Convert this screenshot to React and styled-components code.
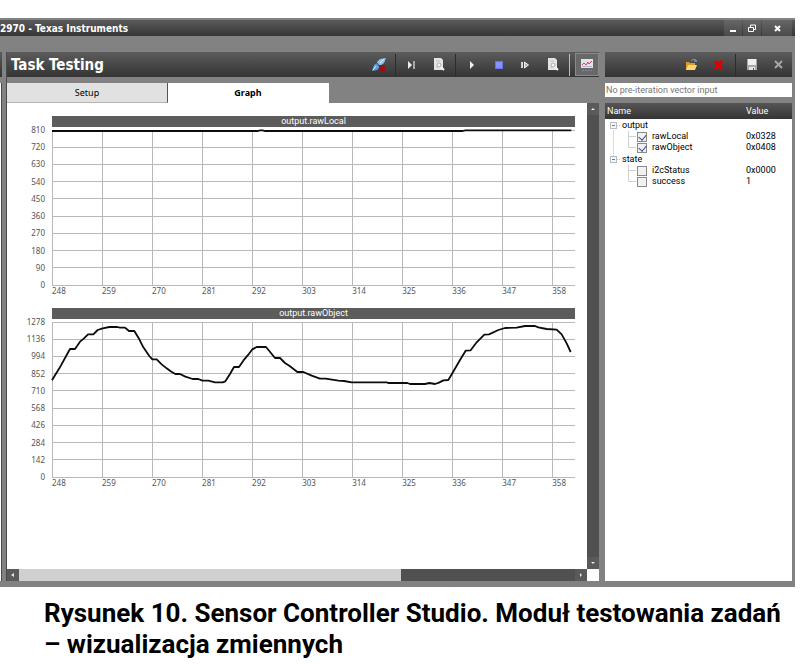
import React from 'react'
import styled, { createGlobalStyle } from 'styled-components'

const uiFont = '"Noto Sans", "Open Sans", sans-serif'
const denseFont = 'Roboto, "Noto Sans", sans-serif'
const titleFont = '"DejaVu Sans Condensed", "DejaVu Sans", sans-serif'

const GlobalStyle = createGlobalStyle`
    * {
        box-sizing: border-box;
    }

    body {
        margin: 0;
        background: #ffffff;
        color: #000000;
        font-family: ${uiFont};
        font-size: 9px;
    }

    button,
    input {
        padding: 0;
        border: 0;
        background: none;
        color: inherit;
        font: inherit;
    }

    svg {
        display: block;
    }
`

const Page = styled.div`
    display: flex;
    flex-direction: column;
    min-height: 100vh;
    padding-top: 18px;
`

const AppWindow = styled.div`
    display: flex;
    flex-direction: column;
    flex: 1;
    margin-right: 10px;
    padding: 2px 0 6px;
    background: #828282;
`

const TitleBar = styled.header`
    display: flex;
    justify-content: space-between;
    height: 16px;
    padding-right: 3px;
    background: linear-gradient(#5a5a5a, #363636);
    color: #ffffff;
`

const WindowTitle = styled.h1`
    margin: 0;
    font: bold 10px/17px ${titleFont};
`

const WindowButtons = styled.div`
    display: flex;
    gap: 1px;
`

const WindowButton = styled.button`
    display: flex;
    align-items: center;
    justify-content: center;
    width: ${({ $wide }) => ($wide ? 30 : 18)}px;
    background: linear-gradient(#666666, #4a4a4a);
`

const Workspace = styled.div`
    display: flex;
    flex: 1;
    padding: 16px 3px 0 0;
`

const CollapsedPanel = styled.aside`
    display: flex;
    flex-direction: column;
    gap: 6px;
    width: 2px;
    margin-right: 4px;
`

const CollapsedBody = styled.div`
    flex: 1;
    border-right: 1px solid #4a4a4a;
    background: #ffffff;
`

const TaskPanel = styled.main`
    display: flex;
    flex-direction: column;
    flex: 1;
    min-width: 0;
    border-left: 1px solid #4a4a4a;
`

const WatchPanel = styled.aside`
    display: flex;
    flex-direction: column;
    width: 187px;
    margin-left: 6px;
    font-family: ${denseFont};
`

const Toolbar = styled.div`
    display: flex;
    align-items: center;
    height: 25px;
    flex-shrink: 0;
    background: linear-gradient(#5c5c5c, #343434);
`

const ToolbarTitle = styled.h2`
    flex: 1;
    margin: 0;
    padding: 2px 0 0 4px;
    color: #ffffff;
    font: bold 15px/23px ${titleFont};
`

const ToolButton = styled.button`
    display: flex;
    align-items: center;
    justify-content: center;
    width: 27px;
    height: 25px;
`

const ActiveToolButton = styled(ToolButton)`
    width: 24px;
    height: 23px;
    margin-left: 3px;
    border: 1px solid #8a8a8a;
    background: #686868;
`

const Separator = styled.span`
    width: 1px;
    height: 22px;
    margin: 0 2px 0 3px;
    background: ${({ $light }) => ($light ? '#bdbdbd' : '#2c2c2c')};
`

const Spacer = styled.span`
    flex: 1;
`

const Tabs = styled.div`
    display: flex;
    margin-top: 6px;
`

const Tab = styled.button`
    width: 161px;
    height: 20px;
    border-right: 1px solid ${({ $active }) => ($active ? '#ffffff' : '#555555')};
    border-bottom: 1px solid ${({ $active }) => ($active ? '#ffffff' : '#b4b4b4')};
    background: ${({ $active }) => ($active ? '#ffffff' : '#e1e1e1')};
    font-weight: ${({ $active }) => ($active ? 'bold' : 'normal')};
`

const ScrollArea = styled.div`
    display: grid;
    grid-template-columns: 1fr 12px;
    grid-template-rows: 1fr 12px;
    flex: 1;
    background: #ffffff;
`

const Charts = styled.div`
    display: flex;
    flex-direction: column;
    gap: 11px;
    min-width: 0;
    padding: 13px 12px 13px 0;
`

const ChartGrid = styled.section`
    display: grid;
    grid-template-columns: 38px 1fr;
    grid-template-rows: 11px 155px 12px;
    row-gap: 3px;
    column-gap: 7px;
    margin-bottom: -3px;
    color: #555555;
    font-size: 8px;
    line-height: 12px;
`

const ChartTitle = styled.h3`
    grid-column: 2;
    margin: 0;
    background: #5c5c5c;
    color: #ffffff;
    font: 9px/11px ${denseFont};
    text-align: center;
`

const YAxis = styled.div`
    display: flex;
    flex-direction: column;
    justify-content: space-between;
    margin: -6px 0;
    text-align: right;
`

const XAxis = styled.div`
    display: grid;
    grid-column: 2;
    grid-template-columns: repeat(10, minmax(0, 11fr)) minmax(0, 5fr);
    margin-top: -3px;
`

const PlotSvg = styled.svg`
    width: 100%;
    height: 155px;
    overflow: visible;

    line,
    polyline {
        fill: none;
        vector-effect: non-scaling-stroke;
    }

    line {
        stroke: #b8b8b8;
        shape-rendering: crispEdges;
    }

    polyline {
        stroke: #0c0c0c;
        stroke-width: 1.8px;
        stroke-linejoin: round;
    }
`

const ScrollTrack = styled.div`
    display: flex;
    flex-direction: ${({ $vertical }) => ($vertical ? 'column' : 'row')};
    justify-content: space-between;
    background: #505050;
`

const ScrollButton = styled.button`
    display: flex;
    align-items: center;
    justify-content: center;
    width: 12px;
    height: 12px;
    background: #5a5a5a;
`

const ScrollThumb = styled.div`
    flex: 11;
    background: #d0d0d0;
`

const ScrollGap = styled.div`
    flex: 5;
`

const VectorInput = styled.input`
    height: 14px;
    margin: 6px 0;
    padding-left: 1px;
    background: #ffffff;
    color: #777777;
`

const WatchBody = styled.div`
    flex: 1;
    background: #ffffff;
`

const WatchTable = styled.table`
    width: 100%;
    border-collapse: collapse;
    table-layout: fixed;

    thead {
        background: linear-gradient(#555555, #353535);
    }

    th {
        height: 16px;
        padding: 0 0 0 2px;
        color: #ffffff;
        font-weight: normal;
        text-align: left;
    }

    th:last-child {
        width: 46px;
        padding: 0;
    }

    td {
        padding: 0;
        line-height: 11px;
    }
`

const NameCell = styled.div`
    display: flex;
    align-items: center;
    height: ${({ $group }) => ($group ? 12 : 11)}px;
`

const TreeToggle = styled.button`
    width: 17px;
    height: 12px;
`

const WatchLabel = styled.label`
    display: flex;
    align-items: center;
    gap: 5px;
`

const Checkbox = styled.input`
    appearance: none;
    width: 10px;
    height: 10px;
    margin: 0;
    border: 1px solid #8a8a8a;
    background: #f1f1f1;

    &:checked::after {
        content: '';
        display: block;
        width: 4px;
        height: 6px;
        margin-left: 2px;
        border: solid #34508c;
        border-width: 0 1px 1px 0;
        transform: rotate(40deg);
    }
`

const Caption = styled.p`
    margin: 0;
    padding: 11px 10px 4px 44px;
    font: bold 26px/31px Roboto, sans-serif;
`

const xTicks = [248, 259, 270, 281, 292, 303, 314, 325, 336, 347, 358]

// trace points are on a 1569 x 465 grid, origin in the top left corner
const charts = [
    {
        name: 'output.rawLocal',
        yTicks: [810, 720, 630, 540, 450, 360, 270, 180, 90, 0],
        trace: '0,3 618,3 624,1 632,1 638,3 1232,3 1240,1 1558,1',
    },
    {
        name: 'output.rawObject',
        yTicks: [1278, 1136, 994, 852, 710, 568, 426, 284, 142, 0],
        trace:
            '0,175 9,160 22,139 54,81 69,81 84,59 96,49 108,37 124,37 137,24 ' +
            '152,19 172,15 196,15 204,17 219,17 231,27 247,27 262,52 274,76 ' +
            '292,102 301,112 314,112 329,127 344,139 356,148 370,156 384,156 ' +
            '400,164 422,171 439,171 451,176 469,176 489,181 512,181 520,178 ' +
            '534,156 546,135 561,135 577,112 589,98 601,82 614,75 642,75 ' +
            '652,87 669,108 684,108 699,123 714,133 736,150 754,150 779,161 ' +
            '804,170 821,170 859,176 876,177 899,181 1004,181 1009,183 ' +
            '1066,183 1074,186 1119,186 1132,183 1149,186 1161,182 1174,175 ' +
            '1189,174 1201,154 1224,114 1241,86 1256,85 1274,61 1297,38 ' +
            '1311,37 1339,24 1359,18 1394,17 1419,12 1449,12 1459,16 1484,21 ' +
            '1514,23 1529,37 1544,64 1556,90',
    },
]

const watches = [
    {
        group: 'output',
        items: [
            { name: 'rawLocal', value: '0x0328', checked: true },
            { name: 'rawObject', value: '0x0408', checked: true },
        ],
    },
    {
        group: 'state',
        items: [
            { name: 'i2cStatus', value: '0x0000', checked: false },
            { name: 'success', value: '1', checked: false },
        ],
    },
]

const ConnectIcon = () => (
    <svg width="14" height="14" viewBox="0 0 14 14">
        <path d="M0 13 L2 7 L6 4 L9 8 L5 12 Z" fill="#5b9fd8" />
        <path d="M5 4 L8 1 L14 0 L12 5 L8 8 Z" fill="#8cc6ee" />
        <path d="M1 12 L4 8 M8 5 L12 1" stroke="#d9efff" />
        <path d="M4 4 L8 9" stroke="#3a4a5c" />
        <rect x="7" y="7" width="6" height="6" fill="#9c1010" />
    </svg>
)

const StepToIcon = () => (
    <svg width="9" height="8" viewBox="0 0 9 8">
        <path d="M1 0 L5 4 L1 8 Z" fill="#ececec" />
        <rect x="6" y="0" width="2" height="8" fill="#a8a8a8" />
    </svg>
)

const LogIcon = () => (
    <svg width="12" height="13" viewBox="0 0 12 13">
        <path d="M1 0 H8 L10 2 V12 H1 Z" fill="#e4e4e4" />
        <path d="M3 3 H7 M3 9 H5" stroke="#c2c2c2" />
        <circle cx="6" cy="7" r="2" fill="#f2f2f2" stroke="#b0b0b0" />
        <path d="M8 9 L11 12" stroke="#f4f4f4" strokeWidth="2" />
    </svg>
)

const PlayIcon = () => (
    <svg width="6" height="8" viewBox="0 0 6 8">
        <path d="M1 0 L5 4 L1 8 Z" fill="#efefef" />
    </svg>
)

const StopIcon = () => (
    <svg width="8" height="8" viewBox="0 0 8 8">
        <rect x="0.5" y="0.5" width="7" height="7" fill="#8593ff" stroke="#6472ec" />
    </svg>
)

const StepIcon = () => (
    <svg width="9" height="8" viewBox="0 0 9 8">
        <rect x="0" y="1" width="2" height="6" fill="#d4d4d4" />
        <path d="M3.5 1 V7 L7.5 4 Z" fill="#b4b4b4" stroke="#efefef" />
    </svg>
)

const GraphIcon = () => (
    <svg width="12" height="12" viewBox="0 0 12 12">
        <rect x="0" y="0" width="12" height="9" fill="#e2e2ea" />
        <path d="M1 6 L3 4 L5 6 L7 3 L8 5 L11 2" fill="none" stroke="#c04868" />
        <path d="M1 7.5 H11" stroke="#b2b2c4" />
        <path d="M1 11.5 H11" stroke="#8585ac" strokeDasharray="2 1" />
    </svg>
)

const OpenIcon = () => (
    <svg width="13" height="13" viewBox="0 0 13 13">
        <path d="M1 12 V4 H4 L5 5 H10 V12 Z" fill="#d99a2c" />
        <path d="M1 12 L3 7 H12 L10 12 Z" fill="#ffd671" />
        <path d="M6 3 Q8 0 11 2 V4 M9 3 H12" fill="none" stroke="#7f9cc8" />
    </svg>
)

const DeleteIcon = () => (
    <svg width="10" height="10" viewBox="0 0 10 10">
        <path d="M1 1 L8 9 M8 1 L1 9" stroke="#e00000" strokeWidth="3" />
    </svg>
)

const SaveIcon = () => (
    <svg width="10" height="11" viewBox="0 0 10 11">
        <rect x="0" y="0" width="10" height="11" fill="#a8a8a8" />
        <rect x="1" y="0" width="8" height="6" fill="#f0f0f0" />
        <rect x="2" y="8" width="6" height="3" fill="#e6e6e6" />
        <rect x="6" y="9" width="1" height="2" fill="#555555" />
    </svg>
)

const ClearIcon = () => (
    <svg width="9" height="9" viewBox="0 0 9 9">
        <path d="M1 1 L8 8 M8 1 L1 8" stroke="#a6a6a6" strokeWidth="2" />
    </svg>
)

const Arrow = ({ d }) => (
    <svg width="6" height="6" viewBox="0 0 6 6">
        <path d={d} fill="#e8e8e8" />
    </svg>
)

const ToggleIcon = ({ first }) => (
    <svg width="17" height="12" viewBox="0 0 17 12">
        <path
            d={first ? 'M8.5 9 V12' : 'M8.5 0 V3'}
            stroke="#c4c4c4"
            strokeDasharray="1 1"
        />
        <path d="M12 6.5 H16" stroke="#c4c4c4" strokeDasharray="1 1" />
        <rect x="5.5" y="3.5" width="6" height="6" fill="#f6f6f6" stroke="#b4bac6" />
        <path d="M7 6.5 H10" stroke="#6a789a" />
    </svg>
)

const Branch = ({ trunk, last }) => (
    <svg width="32" height="11" viewBox="0 0 32 11">
        {trunk && <path d="M8.5 0 V11" stroke="#dcdcdc" />}
        <path
            d={last ? 'M23.5 0 V5.5 H31' : 'M23.5 0 V11 M23.5 5.5 H31'}
            fill="none"
            stroke="#d0d0d0"
        />
    </svg>
)

function Chart({ name, yTicks, trace }) {
    return (
        <ChartGrid>
            <ChartTitle>{name}</ChartTitle>
            <YAxis>
                {yTicks.map((tick) => (
                    <span key={tick}>{tick}</span>
                ))}
            </YAxis>
            <PlotSvg viewBox="0 0 1569 465" preserveAspectRatio="none">
                {yTicks.map((tick, i) => {
                    const y = (i * 465) / (yTicks.length - 1)
                    return <line key={tick} x1="0" x2="1569" y1={y} y2={y} />
                })}
                {xTicks.map((tick) => {
                    const x = ((tick - 248) * 1569) / 115
                    return <line key={tick} x1={x} x2={x} y1="0" y2="465" />
                })}
                <polyline points={trace} />
            </PlotSvg>
            <XAxis>
                {xTicks.map((tick) => (
                    <span key={tick}>{tick}</span>
                ))}
            </XAxis>
        </ChartGrid>
    )
}

function WatchRows({ group, items, first }) {
    return (
        <>
            <tr>
                <td>
                    <NameCell $group>
                        <TreeToggle aria-label={'Collapse ' + group}>
                            <ToggleIcon first={first} />
                        </TreeToggle>
                        {group}
                    </NameCell>
                </td>
                <td />
            </tr>
            {items.map((item, i) => (
                <tr key={item.name}>
                    <td>
                        <NameCell>
                            <Branch trunk={first} last={i === items.length - 1} />
                            <WatchLabel>
                                <Checkbox
                                    type="checkbox"
                                    defaultChecked={item.checked}
                                />
                                {item.name}
                            </WatchLabel>
                        </NameCell>
                    </td>
                    <td>{item.value}</td>
                </tr>
            ))}
        </>
    )
}

function App() {
    return (
        <Page>
            <GlobalStyle />
            <AppWindow>
                <TitleBar>
                    <WindowTitle>2970 - Texas Instruments</WindowTitle>
                    <WindowButtons>
                        <WindowButton aria-label="Minimize">
                            <svg width="8" height="8" viewBox="0 0 8 8">
                                <rect x="1" y="6" width="6" height="2" fill="#ffffff" />
                            </svg>
                        </WindowButton>
                        <WindowButton aria-label="Restore">
                            <svg width="8" height="8" viewBox="0 0 8 8">
                                <path
                                    d="M2.5 3 V1 H7.5 V5.5 H6 M0.5 3.5 H5.5 V7.5 H0.5 Z"
                                    fill="none"
                                    stroke="#ffffff"
                                />
                            </svg>
                        </WindowButton>
                        <WindowButton $wide aria-label="Close">
                            <svg width="7" height="7" viewBox="0 0 7 7">
                                <path
                                    d="M1 1 L6 6 M6 1 L1 6"
                                    stroke="#ffffff"
                                    strokeWidth="2"
                                />
                            </svg>
                        </WindowButton>
                    </WindowButtons>
                </TitleBar>
                <Workspace>
                    <CollapsedPanel>
                        <Toolbar />
                        <CollapsedBody />
                    </CollapsedPanel>
                    <TaskPanel>
                        <Toolbar>
                            <ToolbarTitle>Task Testing</ToolbarTitle>
                            <ToolButton aria-label="Disconnect"><ConnectIcon /></ToolButton>
                            <Separator />
                            <ToolButton aria-label="Run to end"><StepToIcon /></ToolButton>
                            <ToolButton aria-label="View log"><LogIcon /></ToolButton>
                            <Separator />
                            <ToolButton aria-label="Run"><PlayIcon /></ToolButton>
                            <ToolButton aria-label="Stop"><StopIcon /></ToolButton>
                            <ToolButton aria-label="Step"><StepIcon /></ToolButton>
                            <ToolButton aria-label="View code"><LogIcon /></ToolButton>
                            <Separator $light />
                            <ActiveToolButton aria-label="Graph view">
                                <GraphIcon />
                            </ActiveToolButton>
                        </Toolbar>
                        <Tabs>
                            <Tab>Setup</Tab>
                            <Tab $active>Graph</Tab>
                        </Tabs>
                        <ScrollArea>
                            <Charts>
                                {charts.map((chart) => (
                                    <Chart key={chart.name} {...chart} />
                                ))}
                            </Charts>
                            <ScrollTrack $vertical>
                                <ScrollButton aria-label="Scroll up">
                                    <Arrow d="M1 4 L3 2 L5 4 Z" />
                                </ScrollButton>
                                <ScrollButton aria-label="Scroll down">
                                    <Arrow d="M1 2 H5 L3 4 Z" />
                                </ScrollButton>
                            </ScrollTrack>
                            <ScrollTrack>
                                <ScrollButton aria-label="Scroll left">
                                    <Arrow d="M4 1 V5 L1 3 Z" />
                                </ScrollButton>
                                <ScrollThumb />
                                <ScrollGap />
                                <ScrollButton aria-label="Scroll right">
                                    <Arrow d="M2 1 L4 3 L2 5 Z" />
                                </ScrollButton>
                            </ScrollTrack>
                        </ScrollArea>
                    </TaskPanel>
                    <WatchPanel>
                        <Toolbar>
                            <Spacer />
                            <ToolButton aria-label="Open"><OpenIcon /></ToolButton>
                            <ToolButton aria-label="Remove"><DeleteIcon /></ToolButton>
                            <Separator />
                            <ToolButton aria-label="Save"><SaveIcon /></ToolButton>
                            <ToolButton aria-label="Clear"><ClearIcon /></ToolButton>
                        </Toolbar>
                        <VectorInput
                            aria-label="Vector input"
                            readOnly
                            value="No pre-iteration vector input"
                        />
                        <WatchBody>
                            <WatchTable>
                                <thead>
                                    <tr>
                                        <th>Name</th>
                                        <th>Value</th>
                                    </tr>
                                </thead>
                                <tbody>
                                    {watches.map((watch, i) => (
                                        <WatchRows
                                            key={watch.group}
                                            first={i === 0}
                                            {...watch}
                                        />
                                    ))}
                                </tbody>
                            </WatchTable>
                        </WatchBody>
                    </WatchPanel>
                </Workspace>
            </AppWindow>
            <Caption>
                Rysunek 10. Sensor Controller Studio. Moduł testowania zadań –
                wizualizacja zmiennych
            </Caption>
        </Page>
    )
}

export default App
